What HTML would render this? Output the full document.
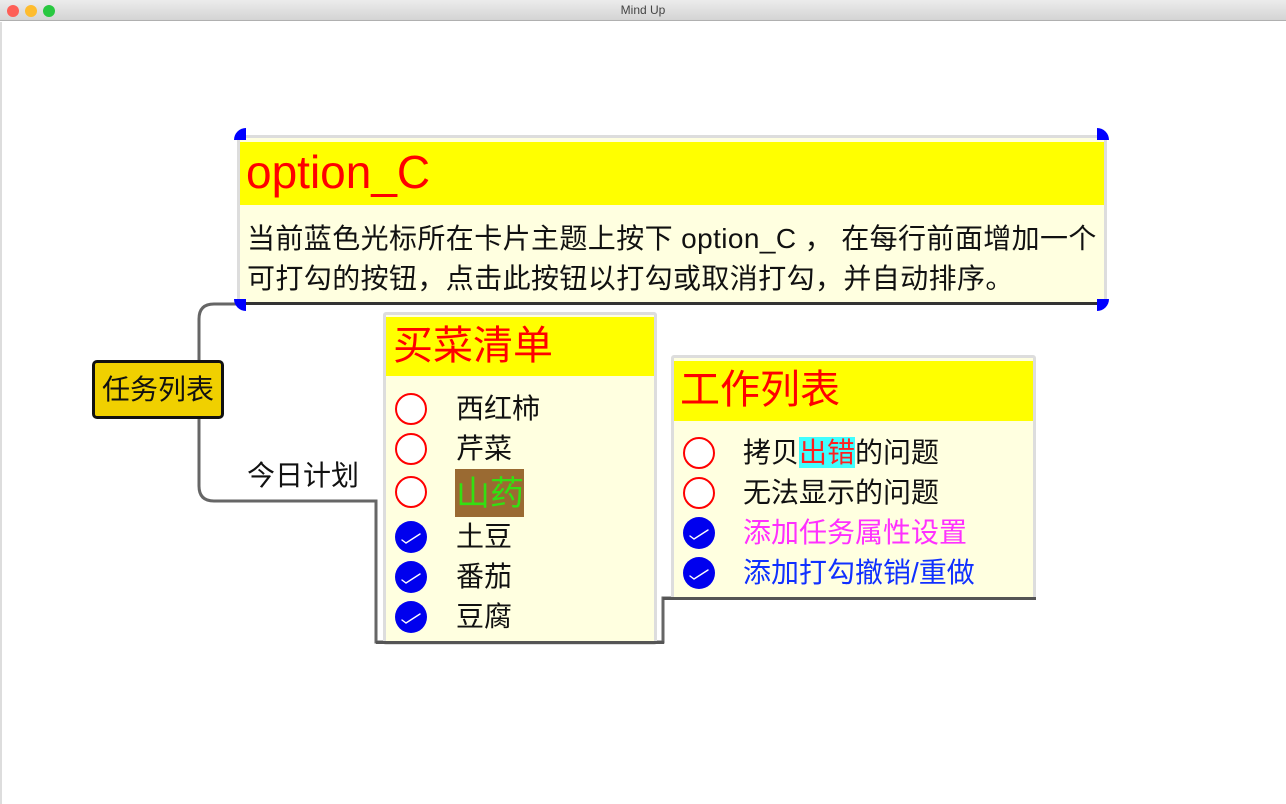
<!DOCTYPE html>
<html><head><meta charset="utf-8"><style>
*{margin:0;padding:0;box-sizing:border-box}
body{width:1286px;height:804px;background:#fff;position:relative;overflow:hidden;font-family:"Liberation Sans","Noto Sans CJK SC",sans-serif}
.a{position:absolute;white-space:nowrap}
.tb{left:0;top:0;width:1286px;height:21px;background:linear-gradient(#ececec,#d4d4d4);border-bottom:1px solid #b0b0b0;font-size:12px;color:#444;text-align:center;line-height:21px}
.dot{top:5px;width:12px;height:12px;border-radius:50%}
.card{border:3px solid #ddd;border-radius:3px;background:#ffffe0}
.hd{background:#ffff00;color:#ff0000}
.t{font-size:28px;color:#111;line-height:32px}
.c{width:32px;height:32px;border-radius:50%}
.o{border:2px solid #f00;background:#fff}
.k{background:#0000ee}
.q{width:12px;height:12px;background:#0000ff}
</style></head><body>
<div class="a tb">Mind Up</div>
<div class="a dot" style="left:7px;background:#fe5f57"></div>
<div class="a dot" style="left:25px;background:#febc2e"></div>
<div class="a dot" style="left:43px;background:#28c840"></div>
<div class="a" style="left:0;top:22px;width:2px;height:782px;background:#ddd"></div>

<svg class="a" style="left:0;top:0" width="1286" height="804">
<path d="M240 304 H214 Q199 304 199 319 V360 M199 418 V486 Q199 501 214 501 H376 V642 H663 V598 H1035" fill="none" stroke="#666" stroke-width="3"/>
</svg>

<!-- top card -->
<div class="a card" style="left:237px;top:135px;width:870px;height:170px"></div>
<div class="a hd" style="left:240px;top:142px;width:864px;height:63px;font-size:46px;line-height:60px;padding-left:6px">option_C</div>
<div class="a t" style="left:247px;top:223px;letter-spacing:0.4px">当前蓝色光标所在卡片主题上按下 option_C ， 在每行前面增加一个</div>
<div class="a t" style="left:247px;top:263px;letter-spacing:0.4px">可打勾的按钮，点击此按钮以打勾或取消打勾，并自动排序。</div>
<div class="a" style="left:240px;top:302px;width:866px;height:3px;background:#333"></div>
<div class="a q" style="left:234px;top:128px;border-radius:12px 0 0 0"></div>
<div class="a q" style="left:1097px;top:128px;border-radius:0 12px 0 0"></div>
<div class="a q" style="left:234px;top:299px;border-radius:0 0 0 12px"></div>
<div class="a q" style="left:1097px;top:299px;border-radius:0 0 12px 0"></div>

<!-- root -->
<div class="a" style="left:92px;top:360px;width:132px;height:59px;background:#f0d000;border:3px solid #111;border-radius:5px;font-size:28px;line-height:53px;text-align:center;color:#111">任务列表</div>
<div class="a t" style="left:247px;top:460px">今日计划</div>

<!-- card 2 -->
<div class="a card" style="left:383px;top:312px;width:274px;height:333px"></div>
<div class="a hd" style="left:386px;top:317px;width:268px;height:59px;font-size:40px;line-height:58px;padding-left:7px">买菜清单</div>
<div class="a c o" style="left:395px;top:393px"></div>
<div class="a c o" style="left:395px;top:433px"></div>
<div class="a c o" style="left:395px;top:476px"></div>
<div class="a c k" style="left:395px;top:521px"></div>
<div class="a c k" style="left:395px;top:561px"></div>
<div class="a c k" style="left:395px;top:601px"></div>
<div class="a t" style="left:456px;top:393px">西红柿</div>
<div class="a t" style="left:456px;top:433px">芹菜</div>
<div class="a" style="left:455px;top:469px;width:69px;height:48px;background:#9a6a32;color:#33e011;font-size:34px;line-height:50px;padding-left:1px">山药</div>
<div class="a t" style="left:456px;top:521px">土豆</div>
<div class="a t" style="left:456px;top:561px">番茄</div>
<div class="a t" style="left:456px;top:601px">豆腐</div>
<div class="a" style="left:376px;top:641px;width:288px;height:3px;background:#555"></div>

<!-- card 3 -->
<div class="a card" style="left:671px;top:355px;width:365px;height:245px"></div>
<div class="a hd" style="left:674px;top:361px;width:359px;height:60px;font-size:40px;line-height:58px;padding-left:6px">工作列表</div>
<div class="a c o" style="left:683px;top:437px"></div>
<div class="a c o" style="left:683px;top:477px"></div>
<div class="a c k" style="left:683px;top:517px"></div>
<div class="a c k" style="left:683px;top:557px"></div>
<div class="a t" style="left:743px;top:437px">拷贝<span style="background:#40ffff;color:#ff2020">出错</span>的问题</div>
<div class="a t" style="left:743px;top:477px">无法显示的问题</div>
<div class="a t" style="left:743px;top:517px;color:#ff30ff">添加任务属性设置</div>
<div class="a t" style="left:743px;top:557px;color:#1030ff">添加打勾撤销/重做</div>
<div class="a" style="left:663px;top:597px;width:373px;height:3px;background:#555"></div>

<svg class="a" style="left:0;top:0" width="1286" height="804">
<g fill="none" stroke="#fff" stroke-width="1.4" stroke-linecap="round">
<path d="M402 540 L406 543 L420 534"/><path d="M402 580 L406 583 L420 574"/><path d="M402 620 L406 623 L420 614"/>
<path d="M690 536 L694 539 L708 530"/><path d="M690 576 L694 579 L708 570"/>
</g></svg>
</body></html>
